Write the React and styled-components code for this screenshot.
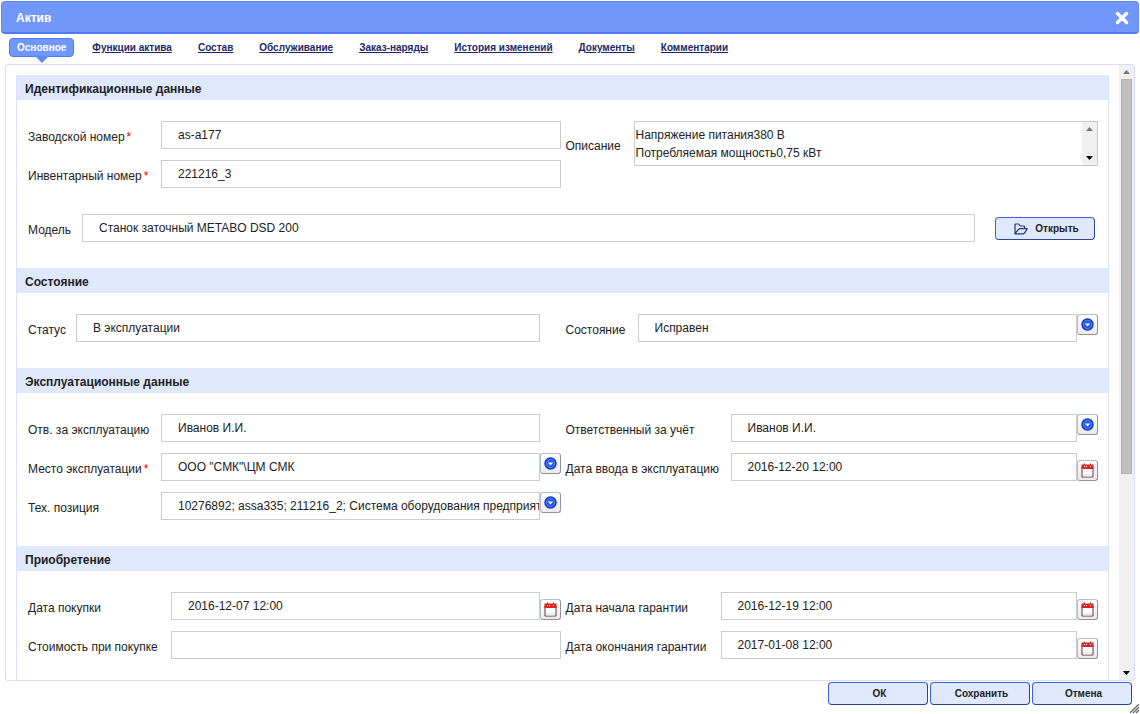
import React from "react";
import styled, { createGlobalStyle } from "styled-components";

const GlobalStyle = createGlobalStyle`
  *, *::before, *::after { box-sizing: border-box; }
  body {
    margin: 0;
    background: #fff;
    color: #222;
    font: 12px/18px "Liberation Sans", Arial, sans-serif;
  }
  button, input, textarea { font: inherit; color: inherit; }
`;

const Dialog = styled.main`
  display: flex;
  flex-direction: column;
  height: 100vh;
  padding: 1px 1px 0;
`;

const TitleBar = styled.header`
  display: flex;
  flex: none;
  align-items: center;
  justify-content: space-between;
  height: 33px;
  padding: 2px 9px 0 14px;
  border: 1px solid #6389f7;
  border-bottom: 2px solid #5079f6;
  border-radius: 4px;
  background: #7197fb;
`;

const Title = styled.h1`
  margin: 0;
  color: #fff;
  font-size: 12px;
  font-weight: bold;
  line-height: 18px;
`;

const CloseButton = styled.button`
  display: flex;
  padding: 0;
  border: 0;
  background: none;
`;

const Tabs = styled.nav`
  display: flex;
  flex: none;
  gap: 10px;
  padding: 4px 8px 7px;
`;

const Tab = styled.a`
  position: relative;
  padding: 1px 7px 0;
  border: 1px solid transparent;
  border-radius: 4px;
  color: #1b2a66;
  font-size: 10px;
  font-weight: bold;
  line-height: 16px;

  &[aria-current] {
    border-color: #4f7af5;
    background: #7197fb;
    color: #fff;
    text-decoration: none;
  }

  &[aria-current]::after {
    content: "";
    position: absolute;
    top: 100%;
    left: 50%;
    margin-left: -7px;
    border: 7px solid transparent;
    border-top-color: #6088f8;
    border-bottom: 0;
  }
`;

const Panel = styled.div`
  display: flex;
  flex: 1;
  min-height: 0;
  margin: 0 4px;
  border: 1px solid #d3defc;
  border-radius: 3px;
`;

const PanelContent = styled.div`
  flex: 1;
  min-width: 0;
  padding: 10px 10px 0;
  overflow: hidden;
`;

const Section = styled.section`
  border: solid #d9e3fd;
  border-width: 0 1px;
`;

const SectionTitle = styled.h2`
  margin: 0;
  padding: 3px 8px 0;
  background: #e0e8fd;
  color: #222;
  font-size: 12px;
  font-weight: bold;
  line-height: 22px;
`;

const SectionBody = styled.div`
  display: flex;
  flex-direction: column;
  gap: 26px;
  padding: 21px 10px 26px 11px;
`;

const Columns = styled.div`
  display: grid;
  grid-template-columns: 1fr 1fr;
  gap: 5px;
`;

const Column = styled.div`
  display: flex;
  flex-direction: column;
  gap: 11px;
`;

const Row = styled.div`
  display: flex;
  align-items: center;
`;

const Label = styled.label`
  flex: none;
  width: ${(p) => p.$width}px;
  padding-top: 5px;
  line-height: 23px;
  white-space: nowrap;
`;

const Required = styled.span`
  margin-left: 2px;
  color: #e00000;
`;

const Input = styled.input`
  flex: 1;
  min-width: 0;
  height: 28px;
  margin: 0 ${(p) => (p.$slot ? 21 : 0)}px 0 0;
  padding: 0 0 0 16px;
  border: 1px solid #ccc;
  background: #fff;
  outline: 0;
`;

const PickButton = styled.button`
  display: flex;
  flex: none;
  align-items: center;
  justify-content: center;
  align-self: ${(p) => p.$align};
  width: 21px;
  height: 21px;
  padding: 0;
  border: 1px solid #b4bdc9;
  border-right-color: #8e959e;
  border-bottom-color: #8e959e;
  border-radius: 3px;
  background: linear-gradient(#fff, #ebebeb);
`;

const MemoBox = styled.div`
  display: flex;
  flex: 1;
  min-width: 0;
  height: 45px;
  border: 1px solid #ccc;
`;

const Memo = styled.textarea`
  flex: 1;
  min-width: 0;
  margin: 0;
  padding: 4px 0 0 1px;
  border: 0;
  outline: 0;
  background: none;
  line-height: 18px;
  overflow: hidden;
  resize: none;
`;

const Track = styled.div`
  display: flex;
  flex: none;
  flex-direction: column;
  align-items: center;
  justify-content: space-between;
  width: 15px;
  padding: 4px 0;
  background: #f0f0f0;
`;

const Thumb = styled.div`
  flex: none;
  width: 11px;
  height: 65%;
  margin: 4px 0 auto;
  border: 1px solid #b3b3b3;
  background: #c0c0c0;
`;

const PushButton = styled.button`
  display: flex;
  flex: none;
  align-items: center;
  justify-content: center;
  gap: 7px;
  width: 100px;
  height: 23px;
  margin-right: ${(p) => p.$inset || 0}px;
  margin-left: ${(p) => p.$lead || 0}px;
  padding: 1px 0 0 3px;
  border: 1px solid #3c62d8;
  border-right-color: #2b4693;
  border-bottom-color: #2b4693;
  border-radius: 4px;
  background: #e0e8fd;
  color: #222;
  font-size: 10px;
  font-weight: bold;
`;

const Footer = styled.footer`
  position: relative;
  display: flex;
  flex: none;
  justify-content: flex-end;
  gap: 2px;
  padding: 1px 7px 9px;
`;

const Grip = styled.svg`
  position: absolute;
  right: 0;
  bottom: 1px;
`;

const Arrow = ({ down, muted }) => (
  <svg width="7" height="6" viewBox="0 0 7 6" aria-hidden="true">
    <path d={down ? "M0 1h7L3.5 5z" : "M0 5h7L3.5 1z"} fill={muted ? "#777" : "#000"} />
  </svg>
);

const CloseIcon = () => (
  <svg width="14" height="14" viewBox="0 0 14 14" aria-hidden="true">
    <path d="M2.5 2.5l9 9M11.5 2.5l-9 9" stroke="#fff" strokeWidth="3.4" strokeLinecap="round" />
  </svg>
);

const DropIcon = () => (
  <svg width="13" height="13" viewBox="0 0 13 13" aria-hidden="true">
    <circle cx="6.5" cy="6.5" r="6.2" fill="#1238c8" />
    <circle cx="6.5" cy="6.5" r="4.2" fill="#2257ea" stroke="#6f97ff" strokeWidth="0.8" />
    <path d="M3.8 5.4h5.4L6.5 8.4z" fill="#fff" />
  </svg>
);

const CalendarIcon = () => (
  <svg width="13" height="15" viewBox="0 0 13 15" aria-hidden="true">
    <path d="M1 4h11v10H1z" fill="#fff" stroke="#703030" />
    <path d="M2 11h9v2.5H2z" fill="#dff1f5" />
    <path d="M0.5 1.5h12v4.5h-12z" fill="#e0211d" />
    <path d="M3.5 0.5v3M9.5 0.5v3" stroke="#8a4040" />
    <path d="M3 3.5h1M5 3.5h1M9 3.5h1" stroke="#fff" />
  </svg>
);

const FolderIcon = () => (
  <svg width="14" height="12" viewBox="0 0 14 12" fill="none" stroke="#27376f" strokeWidth="1.2" strokeLinejoin="round" aria-hidden="true">
    <path d="M1 10.8V1.6L1.6 1h3l1.6 2h3.6l.7.7v1.7" />
    <path d="M1 10.8l3.2-4.2 1.4-.9h7.6l-2.6 4.4-1 .7z" />
  </svg>
);

const Picker = ({ kind, name }) => (
  <PickButton type="button" aria-label={name} $align={kind === "date" ? "flex-end" : "flex-start"}>
    {kind === "date" ? <CalendarIcon /> : <DropIcon />}
  </PickButton>
);

const Field = ({ id, label, value, width, required, kind, slot }) => (
  <Row>
    <Label htmlFor={id} $width={width}>
      {label}
      {required && <Required>*</Required>}
    </Label>
    <Input id={id} defaultValue={value} $slot={slot} />
    {kind && <Picker kind={kind} name={`${label}: выбрать`} />}
  </Row>
);

const TABS = [
  "Основное",
  "Функции актива",
  "Состав",
  "Обслуживание",
  "Заказ-наряды",
  "История изменений",
  "Документы",
  "Комментарии",
];

export default function App() {
  return (
    <>
      <GlobalStyle />
      <Dialog>
        <TitleBar>
          <Title>Актив</Title>
          <CloseButton type="button" aria-label="Закрыть">
            <CloseIcon />
          </CloseButton>
        </TitleBar>
        <Tabs>
          {TABS.map((name, i) => (
            <Tab key={name} href="#" aria-current={i === 0 ? "page" : undefined}>
              {name}
            </Tab>
          ))}
        </Tabs>
        <Panel>
          <PanelContent>
            <Section>
              <SectionTitle>Идентификационные данные</SectionTitle>
              <SectionBody>
                <Columns>
                  <Column>
                    <Field id="serial" label="Заводской номер" value="as-a177" width={133} required />
                    <Field id="inventory" label="Инвентарный номер" value="221216_3" width={133} required />
                  </Column>
                  <Column>
                    <Row>
                      <Label htmlFor="memo" $width={68}>Описание</Label>
                      <MemoBox>
                        <Memo id="memo" defaultValue={"Напряжение питания380 В\nПотребляемая мощность0,75 кВт"} />
                        <Track>
                          <Arrow muted />
                          <Arrow down />
                        </Track>
                      </MemoBox>
                    </Row>
                  </Column>
                </Columns>
                <Row>
                  <Label htmlFor="model" $width={54}>Модель</Label>
                  <Input id="model" defaultValue="Станок заточный METABO DSD 200" />
                  <PushButton type="button" $lead={20} $inset={3}>
                    <FolderIcon />
                    Открыть
                  </PushButton>
                </Row>
              </SectionBody>
            </Section>
            <Section>
              <SectionTitle>Состояние</SectionTitle>
              <SectionBody>
                <Columns>
                  <Field id="status" label="Статус" value="В эксплуатации" width={48} slot />
                  <Field id="condition" label="Состояние" value="Исправен" width={72} kind="list" />
                </Columns>
              </SectionBody>
            </Section>
            <Section>
              <SectionTitle>Эксплуатационные данные</SectionTitle>
              <SectionBody>
                <Columns>
                  <Column>
                    <Field id="operator" label="Отв. за эксплуатацию" value="Иванов И.И." width={133} slot />
                    <Field id="place" label="Место эксплуатации" value={'ООО "СМК"\\ЦМ СМК'} width={133} required kind="list" />
                    <Field id="position" label="Тех. позиция" value="10276892; assa335; 211216_2; Система оборудования предприятия" width={133} kind="list" />
                  </Column>
                  <Column>
                    <Field id="accountant" label="Ответственный за учёт" value="Иванов И.И." width={165} kind="list" />
                    <Field id="started" label="Дата ввода в эксплуатацию" value="2016-12-20 12:00" width={165} kind="date" />
                  </Column>
                </Columns>
              </SectionBody>
            </Section>
            <Section>
              <SectionTitle>Приобретение</SectionTitle>
              <SectionBody>
                <Columns>
                  <Column>
                    <Field id="bought" label="Дата покупки" value="2016-12-07 12:00" width={143} kind="date" />
                    <Field id="cost" label="Стоимость при покупке" value="" width={143} />
                  </Column>
                  <Column>
                    <Field id="warranty-from" label="Дата начала гарантии" value="2016-12-19 12:00" width={155} kind="date" />
                    <Field id="warranty-to" label="Дата окончания гарантии" value="2017-01-08 12:00" width={155} kind="date" />
                  </Column>
                </Columns>
              </SectionBody>
            </Section>
          </PanelContent>
          <Track>
            <Arrow muted />
            <Thumb />
            <Arrow down />
          </Track>
        </Panel>
        <Footer>
          <PushButton type="button">ОК</PushButton>
          <PushButton type="button">Сохранить</PushButton>
          <PushButton type="button">Отмена</PushButton>
          <Grip width="9" height="9" viewBox="0 0 9 9" aria-hidden="true">
            <path d="M0 9L9 0M3 9l6-6M6 9l3-3" stroke="#666" strokeWidth="1.3" />
          </Grip>
        </Footer>
      </Dialog>
    </>
  );
}
